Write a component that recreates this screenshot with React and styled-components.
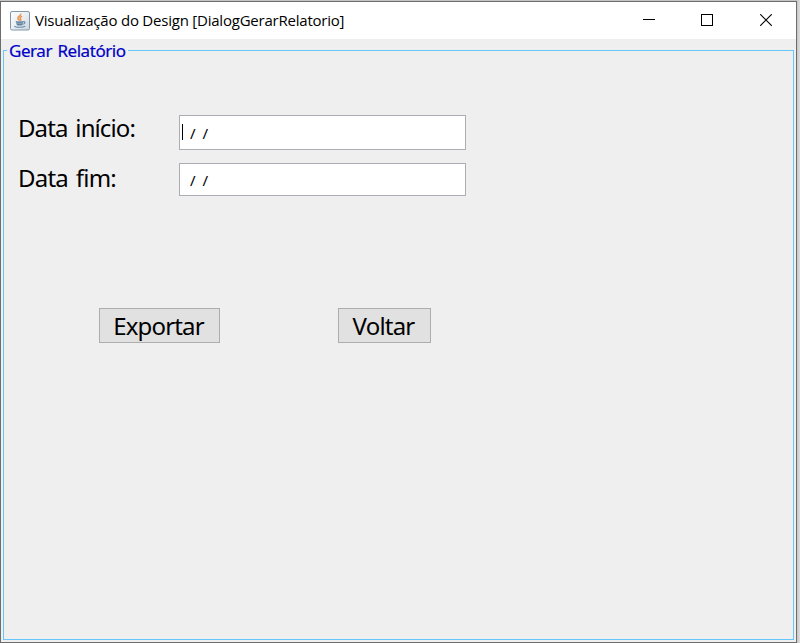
import React from "react";
import styled, { createGlobalStyle } from "styled-components";

const GlobalStyle = createGlobalStyle`
  * { box-sizing: border-box; }
  body { margin: 0; overflow: hidden; background: #d6d6d6; }
`;

const Desktop = styled.div`
  width: 800px;
  height: 643px;
  padding-top: 1px;
  background: linear-gradient(90deg, #c4c4c4 796px, #c6c6c6 797px, #dedede 800px);
`;

const Window = styled.main`
  display: flex;
  flex-direction: column;
  width: 797px;
  height: 642px;
  border: 1px solid #6d6d6d;
  background: #efefef;
  color: #000;
  font-family: "Noto Sans", sans-serif;
`;

const TitleBar = styled.header`
  display: flex;
  align-items: center;
  flex: 0 0 37px;
  padding-left: 9px;
  background: #fff;
`;

const Title = styled.h1`
  margin: 0 auto 0 5px;
  padding-bottom: 2px;
  font: 400 15px/20px "Open Sans", sans-serif;
  letter-spacing: -0.22px;
  white-space: nowrap;
`;

const Controls = styled.div`
  display: flex;
  height: 37px;
`;

const ControlButton = styled.button`
  display: flex;
  align-items: center;
  justify-content: center;
  width: ${(p) => p.$width}px;
  padding: 0;
  border: 0;
  background: transparent;
`;

const Group = styled.section`
  display: flex;
  flex-direction: column;
  flex: 1;
  margin: 0 2px 2px;
`;

const GroupHeader = styled.div`
  display: grid;
  grid-template-columns: 4px 121px 1fr;
  height: 24px;
`;

const HeaderLine = styled.div`
  height: 13px;
  margin-top: 11px;
  border: solid #66c8fa;
  border-width: ${(p) => (p.$end ? "1px 1px 0 0" : "1px 0 0 1px")};
`;

const GroupTitle = styled.h2`
  margin: 0;
  padding-left: 2px;
  font-size: 17px;
  line-height: 24px;
  font-weight: 400;
  letter-spacing: -0.45px;
  word-spacing: 1.5px;
  color: #0000c8;
  -webkit-text-stroke: 0.2px #0000c8;
  white-space: nowrap;
`;

const GroupBody = styled.div`
  flex: 1;
  padding: 52px 0 0 14px;
  border: solid #66c8fa;
  border-width: 0 1px 1px;
`;

const Form = styled.div`
  display: grid;
  grid-template-columns: 161px 287px;
  grid-template-rows: 35px 33px;
  row-gap: 13px;
`;

const Label = styled.label`
  margin-top: ${(p) => p.$top}px;
  font-size: 24px;
  line-height: 28px;
  letter-spacing: ${(p) => p.$spacing}px;
  word-spacing: 2.5px;
  white-space: nowrap;
`;

const DateField = styled.div`
  display: flex;
  align-items: center;
  padding: 1px 0 0 2px;
  border: 1px solid #abadb3;
  background: #fff;
  font-size: 15px;
  line-height: 20px;
  word-spacing: -0.5px;
  white-space: pre;
`;

const Caret = styled.span`
  width: 1px;
  height: 16px;
  margin: -2px 7px 0 0;
  background: ${(p) => (p.$visible ? "#000" : "transparent")};
`;

const Actions = styled.div`
  display: flex;
  gap: 118px;
  margin: 112px 0 0 81px;
`;

const ActionButton = styled.button`
  width: ${(p) => p.$width}px;
  height: 35px;
  padding: 0 2px 0 0;
  border: 1px solid #adadad;
  background: #e1e1e1;
  color: #000;
  font: 400 24px/33px "Noto Sans", sans-serif;
  letter-spacing: ${(p) => p.$spacing}px;
  white-space: nowrap;
`;

function JavaIcon() {
  return (
    <svg width="20" height="20" viewBox="0 0 20 20" fill="none">
      <defs>
        <linearGradient id="tile" x1="0" y1="0" x2="1" y2="1">
          <stop offset="0" stopColor="#fff" />
          <stop offset="0.55" stopColor="#e9edf1" />
          <stop offset="1" stopColor="#c6d3df" />
        </linearGradient>
      </defs>
      <rect x="0.5" y="0.5" width="19" height="18.5" rx="1.5" fill="url(#tile)" stroke="#8497aa" />
      <path d="M10.7 2.6c.9 2-3.2 2.9-2.8 4.9.2 1 1.3 1.5 1.8 2.2M12.2 5.4c-2.2 1-2.7 1.8-1.6 2.8.6.6.2 1-.3 1.5" stroke="#e9924f" strokeWidth="1.5" />
      <path d="M5.8 10.5h7.6l-.8 3.8c-1 .7-4.6.7-5.6 0z" fill="#8ba6bb" />
      <path d="M5.8 10.7c1.8.6 5.6.6 7.4 0M6.6 13c1.6.6 4.6.6 6 0" stroke="#55799a" />
      <path d="M13.2 10.7c2.5-.4 2.2 1.8.1 2.6M4.4 15.1c1 1.5 9 1.5 10.8 0" stroke="#6487a5" strokeWidth="1.1" />
    </svg>
  );
}

export default function App() {
  return (
    <>
      <GlobalStyle />
      <Desktop>
        <Window>
          <TitleBar>
            <JavaIcon />
            <Title>Visualização do Design [DialogGerarRelatorio]</Title>
            <Controls>
              <ControlButton $width={58} aria-label="Minimizar">
                <svg width="12" height="13" shapeRendering="crispEdges"><path d="M0 5.5h12" stroke="#000" /></svg>
              </ControlButton>
              <ControlButton $width={58} aria-label="Maximizar">
                <svg width="12" height="13" shapeRendering="crispEdges"><path d="M.5.5h11v11H.5z" fill="none" stroke="#000" /></svg>
              </ControlButton>
              <ControlButton $width={60} aria-label="Fechar">
                <svg width="12" height="13"><path d="M.2.2l11.6 11.6M11.8.2L.2 11.8" stroke="#000" strokeWidth="1.1" /></svg>
              </ControlButton>
            </Controls>
          </TitleBar>
          <Group>
            <GroupHeader>
              <HeaderLine />
              <GroupTitle>Gerar Relatório</GroupTitle>
              <HeaderLine $end />
            </GroupHeader>
            <GroupBody>
              <Form>
                <Label $top={-1} $spacing={-0.9}>Data início:</Label>
                <DateField><Caret $visible />/  /</DateField>
                <Label $top={1} $spacing={-0.8}>Data fim:</Label>
                <DateField><Caret />/  /</DateField>
              </Form>
              <Actions>
                <ActionButton $width={121} $spacing={-0.85}>Exportar</ActionButton>
                <ActionButton $width={93} $spacing={-0.8}>Voltar</ActionButton>
              </Actions>
            </GroupBody>
          </Group>
        </Window>
      </Desktop>
    </>
  );
}
